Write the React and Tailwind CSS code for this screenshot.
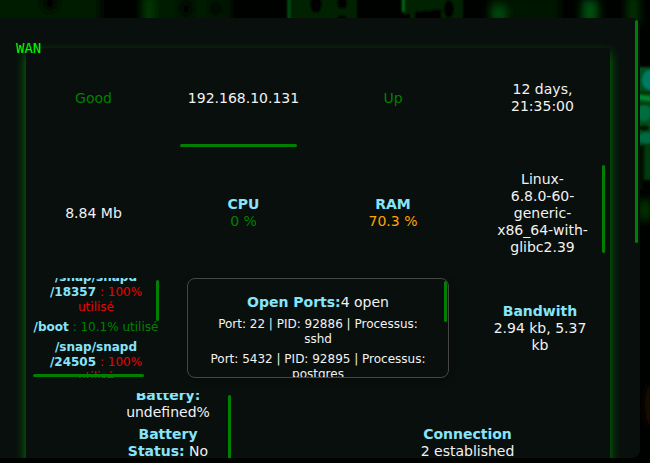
const label = 'font-bold text-[#87e5fb]';

// A scroll thumb laid over the edge of its scrolling region.
function Thumb({ className }) {
  return <i className={`absolute block rounded-[2px] bg-[#008000] ${className}`} />;
}

function Disk({ name, value, tone, className = '' }) {
  return (
    <p className={`text-[12px] leading-[15px] ${tone} ${className}`}>
      <b className={label}>{name}</b> : {value}
    </p>
  );
}

function Backdrop() {
  return (
    <svg className="absolute inset-0" width="650" height="463">
      <defs>
        <filter id="soft" x="-50%" y="-50%" width="200%" height="200%">
          <feGaussianBlur stdDeviation="4" />
        </filter>
        <filter id="fine" x="-50%" y="-50%" width="200%" height="200%">
          <feGaussianBlur stdDeviation="1.2" />
        </filter>
      </defs>
      <rect width="650" height="463" fill="#000200" />
      <g filter="url(#soft)">
        <rect x="-10" y="-5" width="110" height="30" fill="#001a00" />
        <rect x="142" y="-5" width="88" height="30" fill="#001c00" />
        <rect x="143" y="-5" width="10" height="30" fill="#003a00" />
        <ellipse cx="50" cy="4" rx="8" ry="8" fill="#000400" />
        <ellipse cx="186" cy="9" rx="7" ry="10" fill="#000" />
        <ellipse cx="216" cy="9" rx="6" ry="9" fill="#000" />
        <rect x="490" y="-5" width="70" height="30" fill="#001800" />
        <rect x="491" y="7" width="14" height="14" fill="#004a0c" />
        <rect x="582" y="0" width="16" height="24" fill="#00500a" />
        <rect x="627" y="-5" width="12" height="30" fill="#003000" />
        <rect x="638" y="200" width="14" height="20" fill="#003000" />
        <ellipse cx="652" cy="405" rx="7" ry="22" fill="#1a0c00" />
      </g>
      <g filter="url(#fine)">
        <rect x="287" y="-2" width="70" height="22" fill="#002300" />
        <rect x="288" y="-2" width="2" height="22" fill="#005512" />
        <ellipse cx="316" cy="4" rx="6" ry="9" fill="#000300" />
        <ellipse cx="342" cy="3" rx="5" ry="6" fill="#000300" />
        <ellipse cx="342" cy="18" rx="5" ry="3" fill="#000300" />
        <rect x="404" y="-2" width="59" height="22" fill="#002300" />
        <rect x="402" y="-2" width="2" height="14" fill="#007a12" />
        <path d="M395 14h15v5h-15zM415 12l26-3v12h-26z" fill="#000400" />
        <ellipse cx="449" cy="9" rx="5" ry="9" fill="#000300" />
        <rect x="636" y="67" width="18" height="78" fill="#00501c" />
        <ellipse cx="650" cy="80" rx="8" ry="10" fill="#007a66" />
        <path d="M638 91h14v3h-14zM638 103h14v2h-14z" fill="#003000" />
        <path d="M638 95l14 2v4l-14-2z" fill="#008a34" />
        <ellipse cx="644" cy="113" rx="7" ry="8" fill="#006d3c" />
        <ellipse cx="644" cy="128" rx="6" ry="3" fill="#001400" />
        <ellipse cx="647" cy="138" rx="9" ry="5" fill="#006b44" />
        <rect x="638" y="145" width="5" height="45" fill="#000a00" />
        <rect x="644" y="144" width="8" height="36" fill="#003a10" />
      </g>
    </svg>
  );
}

export default function App() {
  return (
    <div className="relative h-[463px] w-[650px] overflow-hidden bg-black font-['DejaVu_Sans',sans-serif] text-[14px] leading-[17px] text-[#f2f2f2]">
      <Backdrop />
      <main className="relative mt-[18px] h-[440px] w-[640px] overflow-hidden rounded-r-lg bg-[#090f0d] pt-[30px] pl-[26px]">
        <Thumb className="top-[2px] right-[2px] h-[223px] w-[3px]" />
        <section className="relative h-[430px] w-[584px] bg-[#090f0d] shadow-[0_5px_10px_#008000]">
          <span className="absolute top-[-8px] left-[-10px] font-['DejaVu_Sans_Mono',monospace] text-[#00f900]">WAN</span>

          <div className="grid h-[100px] grid-cols-[135px_165px_134px_165px] items-center text-center">
            <p className="text-[#008000]">Good</p>
            <p>192.168.10.131</p>
            <p className="text-[#008000]">Up</p>
            <p>12 days,<br />21:35:00</p>
          </div>
          <Thumb className="top-[96px] left-[154px] h-[3px] w-[117px]" />

          <div className="grid h-[130px] grid-cols-[135px_165px_134px_165px] items-center text-center">
            <p>8.84 Mb</p>
            <p><b className={label}>CPU</b><br /><span className="text-[#008000]">0 %</span></p>
            <p><b className={label}>RAM</b><br /><span className="text-[#ffa500]">70.3 %</span></p>
            <p>Linux-<br />6.8.0-60-<br />generic-<br />x86_64-with-<br />glibc2.39</p>
          </div>
          <Thumb className="top-[117px] right-[5px] h-[88px] w-[3px]" />

          <div className="flex h-[100px] text-center">
            <div className="relative ml-[7px] h-[100px] w-[126px] overflow-hidden whitespace-nowrap">
              <Disk className="-mt-[8px]" tone="text-[#ee0000]" name={<>/snap/snapd<br />/18357</>} value={<>100%<br />utilisé</>} />
              <Disk className="mt-[5px]" tone="text-[#008000]" name="/boot" value="10.1% utilisé" />
              <Disk className="mt-[5px]" tone="text-[#ee0000]" name={<>/snap/snapd<br />/24505</>} value={<>100%<br />utilisé</>} />
              <Thumb className="top-[2px] right-0 h-[41px] w-[3px]" />
              <Thumb className="bottom-[1px] left-0 h-[3px] w-[111px]" />
            </div>
            <div className="relative ml-[28px] h-[100px] w-[262px] overflow-hidden rounded-lg border border-[#444746] pt-[15px] shadow-[0_2px_8px_rgba(0,0,0,0.25)]">
              <p><b className={label}>Open Ports:</b>4 open</p>
              <p className="mt-[6px] text-[12px] leading-[15px]">Port: 22 | PID: 92886 | Processus:<br />sshd</p>
              <p className="mt-[5px] text-[12px] leading-[15px]">Port: 5432 | PID: 92895 | Processus:<br />postgres</p>
              <Thumb className="top-[2px] right-[1px] h-[41px] w-[3px]" />
            </div>
            <p className="ml-[39px] w-[104px] pt-[25px]"><b className={label}>Bandwith</b><br />2.94 kb, 5.37<br />kb</p>
          </div>

          <div className="mt-[15px] flex h-[65px] text-center">
            <div className="relative ml-[87px] h-[65px] w-[118px] overflow-hidden">
              <p className="-mt-[6px] w-[110px]"><b className={label}>Battery:</b><br />undefined%</p>
              <p className="mt-[5px] w-[110px]"><b className={label}>Battery<br />Status:</b> No</p>
              <Thumb className="top-[2px] right-0 h-[70px] w-[3px]" />
            </div>
            <p className="ml-[179px] w-[115px] pt-[33px]"><b className={label}>Connection</b><br />2 established</p>
          </div>
        </section>
      </main>
    </div>
  );
}
